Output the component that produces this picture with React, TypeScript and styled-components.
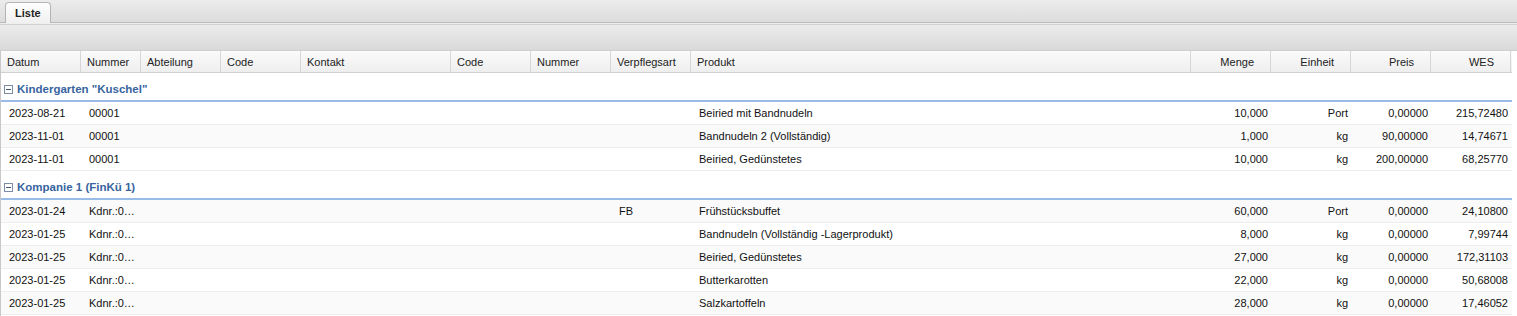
import styled, { createGlobalStyle } from 'styled-components'

const GlobalStyle = createGlobalStyle`
  html, body {
    margin: 0;
    padding: 0;
    background: #fff;
    font-family: "Liberation Sans", Arial, sans-serif;
  }
`

// column widths of the grid, in order
const WIDTHS = [80, 60, 80, 80, 150, 80, 80, 80, 500, 80, 80, 80, 80]
const COLS = WIDTHS.map(w => `${w}px`).join(' ')

type Align = 'left' | 'right'

interface Column {
  title: string
  align: Align
}

const COLUMNS: Column[] = [
  { title: 'Datum', align: 'left' },
  { title: 'Nummer', align: 'left' },
  { title: 'Abteilung', align: 'left' },
  { title: 'Code', align: 'left' },
  { title: 'Kontakt', align: 'left' },
  { title: 'Code', align: 'left' },
  { title: 'Nummer', align: 'left' },
  { title: 'Verpflegsart', align: 'left' },
  { title: 'Produkt', align: 'left' },
  { title: 'Menge', align: 'right' },
  { title: 'Einheit', align: 'right' },
  { title: 'Preis', align: 'right' },
  { title: 'WES', align: 'right' },
]

type RowData = [string, string, string, string, string, string, string, string, string, string, string, string, string]

interface Group {
  title: string
  rows: RowData[]
}

const GROUPS: Group[] = [
  {
    title: 'Kindergarten "Kuschel"',
    rows: [
      ['2023-08-21', '00001', '', '', '', '', '', '', 'Beiried mit Bandnudeln', '10,000', 'Port', '0,00000', '215,72480'],
      ['2023-11-01', '00001', '', '', '', '', '', '', 'Bandnudeln 2 (Vollständig)', '1,000', 'kg', '90,00000', '14,74671'],
      ['2023-11-01', '00001', '', '', '', '', '', '', 'Beiried, Gedünstetes', '10,000', 'kg', '200,00000', '68,25770'],
    ],
  },
  {
    title: 'Kompanie 1 (FinKü 1)',
    rows: [
      ['2023-01-24', 'Kdnr.:0…', '', '', '', '', '', 'FB', 'Frühstücksbuffet', '60,000', 'Port', '0,00000', '24,10800'],
      ['2023-01-25', 'Kdnr.:0…', '', '', '', '', '', '', 'Bandnudeln (Vollständig -Lagerprodukt)', '8,000', 'kg', '0,00000', '7,99744'],
      ['2023-01-25', 'Kdnr.:0…', '', '', '', '', '', '', 'Beiried, Gedünstetes', '27,000', 'kg', '0,00000', '172,31103'],
      ['2023-01-25', 'Kdnr.:0…', '', '', '', '', '', '', 'Butterkarotten', '22,000', 'kg', '0,00000', '50,68008'],
      ['2023-01-25', 'Kdnr.:0…', '', '', '', '', '', '', 'Salzkartoffeln', '28,000', 'kg', '0,00000', '17,46052'],
    ],
  },
]

const Panel = styled.div`
  display: flex;
  flex-direction: column;
  width: 1517px;
  height: 316px;
  overflow: hidden;
  font-size: 11px;
  color: #000;
`

const TabStrip = styled.div`
  display: flex;
  align-items: flex-end;
  height: 22px;
  padding-left: 5px;
  background: linear-gradient(#ececec, #dcdcdc);
  border-bottom: 1px solid #bcbcbc;
`

const Tab = styled.div`
  display: flex;
  align-items: center;
  height: 20px;
  padding: 0 9px;
  margin-bottom: -1px;
  border: 1px solid #b4b4b4;
  border-bottom: none;
  border-radius: 4px 4px 0 0;
  background: linear-gradient(#fefefe, #f0f0f0);
  font-weight: bold;
  font-size: 11px;
  color: #222;
`

const StripGap = styled.div`
  height: 1px;
  background: #eeeeee;
  border-bottom: 1px solid #d0d0d0;
`

const Toolbar = styled.div`
  height: 25px;
  background: linear-gradient(#ececec, #d9d9d9);
  border-bottom: 1px solid #cfcfcf;
`

const GridArea = styled.div`
  width: 1511px;
  border-left: 1px solid #c8c8c8;
  flex: 1;
`

const HeaderRow = styled.div`
  display: grid;
  grid-template-columns: ${COLS};
  height: 21px;
  background: linear-gradient(#fbfbfb, #eeeeee);
  border-bottom: 1px solid #d0d0d0;
`

const HeaderCell = styled.div<{ $align: Align }>`
  display: flex;
  align-items: center;
  justify-content: ${p => (p.$align === 'right' ? 'flex-end' : 'flex-start')};
  padding: ${p => (p.$align === 'right' ? '0 16px 0 0' : '0 0 0 6px')};
  border-right: 1px solid #d6d6d6;
  white-space: nowrap;
  overflow: hidden;
  color: #222;
`

const GroupHeader = styled.div`
  display: flex;
  align-items: center;
  gap: 4px;
  height: 16px;
  padding: 8px 0 3px 3px;
  border-bottom: 2px solid #99bbe8;
  font-weight: bold;
  font-size: 11.5px;
  color: #3764a0;
`

const GroupToggle = styled.span`
  position: relative;
  width: 7px;
  height: 7px;
  border: 1px solid #7a8ea8;
  background: #fff;

  &::after {
    content: '';
    position: absolute;
    left: 1px;
    right: 1px;
    top: 3px;
    height: 1px;
    background: #3d5578;
  }
`

const Row = styled.div<{ $alt: boolean }>`
  display: grid;
  grid-template-columns: ${COLS};
  height: 22px;
  border-bottom: 1px solid #ededed;
  background: ${p => (p.$alt ? '#fafafa' : '#ffffff')};
`

const Cell = styled.div<{ $align: Align }>`
  display: flex;
  align-items: center;
  justify-content: ${p => (p.$align === 'right' ? 'flex-end' : 'flex-start')};
  padding: ${p => (p.$align === 'right' ? '0 3px 0 0' : '0 0 0 8px')};
  white-space: nowrap;
  overflow: hidden;
  color: #111;
`

export default function App() {
  let index = 0
  return (
    <>
      <GlobalStyle />
      <Panel>
        <TabStrip>
          <Tab>Liste</Tab>
        </TabStrip>
        <StripGap />
        <Toolbar />
        <GridArea>
          <HeaderRow>
            {COLUMNS.map((c, i) => (
              <HeaderCell key={i} $align={c.align}>{c.title}</HeaderCell>
            ))}
          </HeaderRow>
          {GROUPS.map(g => (
            <div key={g.title}>
              <GroupHeader>
                <GroupToggle />
                {g.title}
              </GroupHeader>
              {g.rows.map(r => {
                const alt = index++ % 2 === 1
                return (
                  <Row key={index} $alt={alt}>
                    {r.map((v, i) => (
                      <Cell key={i} $align={COLUMNS[i].align}>{v}</Cell>
                    ))}
                  </Row>
                )
              })}
            </div>
          ))}
        </GridArea>
      </Panel>
    </>
  )
}
